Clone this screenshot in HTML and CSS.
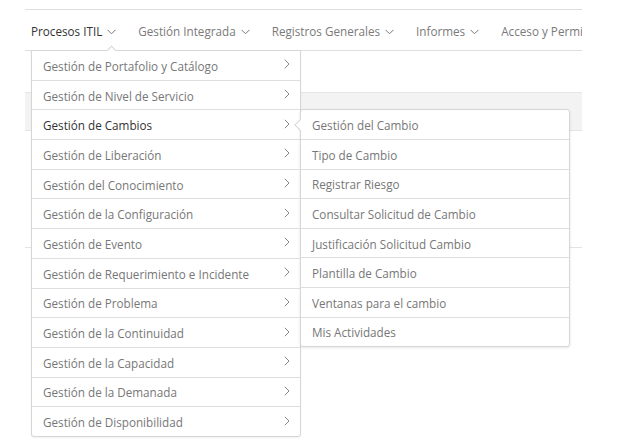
FILE: index.html
```html
<!DOCTYPE html>
<html lang="es">
<head>
<meta charset="utf-8">
<title>Procesos ITIL</title>
<link rel="stylesheet" href="styles.css">
</head>
<body>
<div class="page">
  <nav class="navbar">
    <div class="nav-item active">
      <span>Procesos ITIL</span>
      <svg class="caret" width="9" height="6" viewBox="0 0 9 6"><path d="M0.5 0.8 L4.5 4.8 L8.5 0.8" fill="none" stroke="currentColor" stroke-width="1"/></svg>
      <div class="menu">
        <div class="menu-row"><span>Gestión de Portafolio y Catálogo</span><svg class="chev" width="6" height="10" viewBox="0 0 6 10"><path d="M0.8 0.8 L5 5 L0.8 9.2" fill="none" stroke="currentColor" stroke-width="1"/></svg></div>
        <div class="menu-row"><span>Gestión de Nivel de Servicio</span><svg class="chev" width="6" height="10" viewBox="0 0 6 10"><path d="M0.8 0.8 L5 5 L0.8 9.2" fill="none" stroke="currentColor" stroke-width="1"/></svg></div>
        <div class="menu-row current"><span>Gestión de Cambios</span><svg class="chev" width="6" height="10" viewBox="0 0 6 10"><path d="M0.8 0.8 L5 5 L0.8 9.2" fill="none" stroke="currentColor" stroke-width="1"/></svg>
          <div class="submenu">
            <div class="sub-row">Gestión del Cambio</div>
            <div class="sub-row">Tipo de Cambio</div>
            <div class="sub-row">Registrar Riesgo</div>
            <div class="sub-row">Consultar Solicitud de Cambio</div>
            <div class="sub-row">Justificación Solicitud Cambio</div>
            <div class="sub-row">Plantilla de Cambio</div>
            <div class="sub-row">Ventanas para el cambio</div>
            <div class="sub-row">Mis Actividades</div>
          </div>
        </div>
        <div class="menu-row"><span>Gestión de Liberación</span><svg class="chev" width="6" height="10" viewBox="0 0 6 10"><path d="M0.8 0.8 L5 5 L0.8 9.2" fill="none" stroke="currentColor" stroke-width="1"/></svg></div>
        <div class="menu-row"><span>Gestión del Conocimiento</span><svg class="chev" width="6" height="10" viewBox="0 0 6 10"><path d="M0.8 0.8 L5 5 L0.8 9.2" fill="none" stroke="currentColor" stroke-width="1"/></svg></div>
        <div class="menu-row"><span>Gestión de la Configuración</span><svg class="chev" width="6" height="10" viewBox="0 0 6 10"><path d="M0.8 0.8 L5 5 L0.8 9.2" fill="none" stroke="currentColor" stroke-width="1"/></svg></div>
        <div class="menu-row"><span>Gestión de Evento</span><svg class="chev" width="6" height="10" viewBox="0 0 6 10"><path d="M0.8 0.8 L5 5 L0.8 9.2" fill="none" stroke="currentColor" stroke-width="1"/></svg></div>
        <div class="menu-row"><span>Gestión de Requerimiento e Incidente</span><svg class="chev" width="6" height="10" viewBox="0 0 6 10"><path d="M0.8 0.8 L5 5 L0.8 9.2" fill="none" stroke="currentColor" stroke-width="1"/></svg></div>
        <div class="menu-row"><span>Gestión de Problema</span><svg class="chev" width="6" height="10" viewBox="0 0 6 10"><path d="M0.8 0.8 L5 5 L0.8 9.2" fill="none" stroke="currentColor" stroke-width="1"/></svg></div>
        <div class="menu-row"><span>Gestión de la Continuidad</span><svg class="chev" width="6" height="10" viewBox="0 0 6 10"><path d="M0.8 0.8 L5 5 L0.8 9.2" fill="none" stroke="currentColor" stroke-width="1"/></svg></div>
        <div class="menu-row"><span>Gestión de la Capacidad</span><svg class="chev" width="6" height="10" viewBox="0 0 6 10"><path d="M0.8 0.8 L5 5 L0.8 9.2" fill="none" stroke="currentColor" stroke-width="1"/></svg></div>
        <div class="menu-row"><span>Gestión de la Demanada</span><svg class="chev" width="6" height="10" viewBox="0 0 6 10"><path d="M0.8 0.8 L5 5 L0.8 9.2" fill="none" stroke="currentColor" stroke-width="1"/></svg></div>
        <div class="menu-row"><span>Gestión de Disponibilidad</span><svg class="chev" width="6" height="10" viewBox="0 0 6 10"><path d="M0.8 0.8 L5 5 L0.8 9.2" fill="none" stroke="currentColor" stroke-width="1"/></svg></div>
      </div>
    </div>
    <div class="nav-item"><span>Gestión Integrada</span><svg class="caret" width="9" height="6" viewBox="0 0 9 6"><path d="M0.5 0.8 L4.5 4.8 L8.5 0.8" fill="none" stroke="currentColor" stroke-width="1"/></svg></div>
    <div class="nav-item"><span>Registros Generales</span><svg class="caret" width="9" height="6" viewBox="0 0 9 6"><path d="M0.5 0.8 L4.5 4.8 L8.5 0.8" fill="none" stroke="currentColor" stroke-width="1"/></svg></div>
    <div class="nav-item"><span>Informes</span><svg class="caret" width="9" height="6" viewBox="0 0 9 6"><path d="M0.5 0.8 L4.5 4.8 L8.5 0.8" fill="none" stroke="currentColor" stroke-width="1"/></svg></div>
    <div class="nav-item last"><span>Acceso y Permisos</span></div>
  </nav>
  <section class="panel">
    <div class="panel-head"></div>
    <div class="panel-body"></div>
  </section>
</div>
</body>
</html>
```
FILE: styles.css
```css
html, body {
  margin: 0;
  padding: 0;
  background: #fff;
}
body {
  font-family: "Open Sans", "Noto Sans", sans-serif;
  color: #777;
  min-height: 447px;
}
.page {
  margin-left: 25px;
  width: 557px;
  padding-top: 9px;
  min-height: 438px;
}
.navbar {
  display: flex;
  align-items: center;
  height: 40px;
  border-top: 1px solid #dedede;
  border-bottom: 1px solid #dedede;
  padding-left: 6px;
  white-space: nowrap;
  position: relative;
  z-index: 2;
}
.nav-item {
  display: flex;
  align-items: center;
  gap: 5px;
  font-size: 11.7px;
  color: #7a7a7a;
  margin-right: 22px;
  height: 40px;
  padding-top: 2px;
  box-sizing: border-box;
  flex: none;
}
.nav-item.last {
  flex: 1 1 auto;
  min-width: 0;
  overflow: hidden;
  margin-right: 0;
}
.nav-item.active {
  color: #333;
  position: relative;
}
.caret {
  color: #777;
  margin-top: 2px;
}
.menu {
  position: absolute;
  top: 40px;
  left: 0;
  width: 270px;
  box-sizing: border-box;
  background: #fff;
  border: 1px solid #d6d6d6;
  border-radius: 0 0 3px 3px;
  box-shadow: 0 1px 2px rgba(0,0,0,0.06);
  font-size: 11.7px;
  color: #777;
}
.menu::before {
  content: "";
  position: absolute;
  left: 76px;
  top: -4px;
  width: 6px;
  height: 6px;
  transform: rotate(45deg);
  background: #fff;
  border-top: 1px solid #d6d6d6;
  border-left: 1px solid #d6d6d6;
}
.menu-row {
  display: flex;
  align-items: center;
  justify-content: space-between;
  height: 29.7px;
  box-sizing: border-box;
  padding: 1px 10px 0 11px;
  border-bottom: 1px solid #dedede;
  position: relative;
}
.menu-row:last-child {
  border-bottom: none;
  height: 28.7px;
}
.menu-row.current {
  color: #333;
}
.chev {
  color: #888;
  margin-bottom: 3px;
}
.submenu {
  position: absolute;
  top: -1px;
  left: 100%;
  width: 270px;
  box-sizing: border-box;
  background: #fff;
  border: 1px solid #d6d6d6;
  border-radius: 3px;
  box-shadow: 0 1px 3px rgba(0,0,0,0.1);
  color: #777;
}
.submenu::before {
  content: "";
  position: absolute;
  top: 11px;
  left: -5px;
  width: 7px;
  height: 7px;
  transform: rotate(45deg);
  background: #fff;
  border-left: 1px solid #d6d6d6;
  border-bottom: 1px solid #d6d6d6;
}
.sub-row {
  height: 29.6px;
  box-sizing: border-box;
  display: flex;
  align-items: center;
  padding: 1px 0 0 11px;
  border-bottom: 1px solid #dedede;
}
.sub-row:last-child {
  border-bottom: none;
  height: 28.6px;
}
.panel {
  margin-top: 41px;
}
.panel-head {
  height: 37px;
  background: #f3f3f3;
  border-top: 1px solid #e6e6e6;
  border-bottom: 1px solid #e4e4e4;
}
.panel-body {
  height: 116px;
  border-bottom: 1px solid #e4e4e4;
}
```
